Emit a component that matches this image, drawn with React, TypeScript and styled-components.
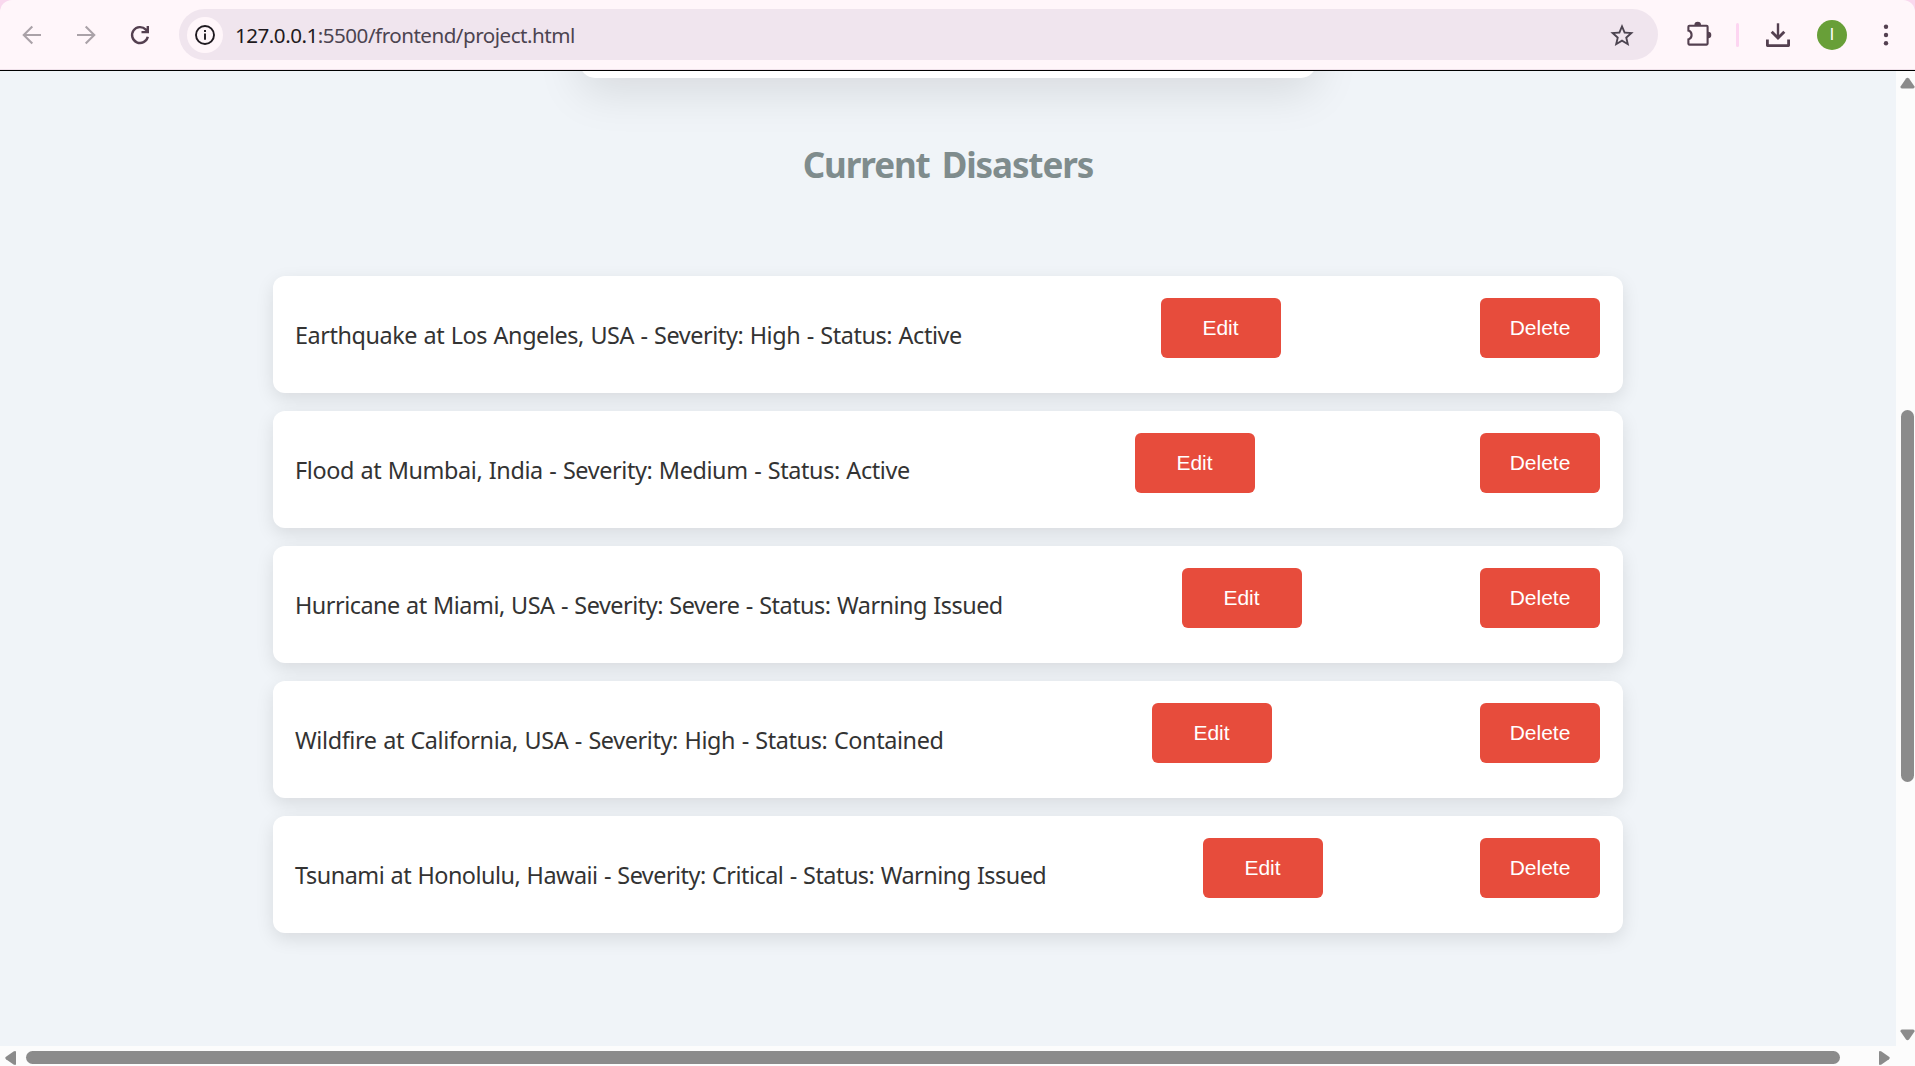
import React from "react";
import styled, { createGlobalStyle } from "styled-components";

const Global = createGlobalStyle`
  * { box-sizing: border-box; }
  body { margin: 0; overflow: hidden; background: #fcfcfc; font-family: "Noto Sans", "Open Sans", sans-serif; }
`;

const Window = styled.div`
  display: flex;
  flex-direction: column;
  width: 1915px;
  height: 1066px;
  overflow: hidden;
  background: #f9d8ee;
`;

const Toolbar = styled.header`
  display: flex;
  align-items: flex-start;
  flex: none;
  height: 71px;
  padding: 9px 14px 0 17px;
  background: #fff6fa;
  border-bottom: 1px solid #000;
  box-shadow: inset 0 -1px 0 #efe1ea;
  border-radius: 12px 12px 0 0;
`;

const NavGroup = styled.div`
  display: flex;
  align-items: center;
  gap: 24px;
  flex: none;
  width: 162px;
  height: 52px;
`;

const Icon = styled.svg<{ $size?: number; $color?: string }>`
  display: block;
  flex: none;
  width: ${(p) => p.$size ?? 30}px;
  height: ${(p) => p.$size ?? 30}px;
  color: ${(p) => p.$color ?? "#544050"};
`;

const AddressBar = styled.div`
  display: flex;
  align-items: center;
  flex: none;
  width: 1479px;
  height: 51px;
  padding: 0 22px 0 8px;
  border-radius: 26px;
  background: #f0e5ee;
`;

const SiteInfo = styled.span`
  display: grid;
  place-items: center;
  width: 36px;
  height: 36px;
  border-radius: 50%;
  background: #fff6fa;
`;

const Url = styled.span`
  flex: 1;
  margin-left: 12px;
  font-size: 20.6px;
  line-height: 28px;
  letter-spacing: -0.5px;
  color: #4c4450;
`;

const Host = styled.span`
  color: #1f1a20;
`;

const Actions = styled.div`
  display: flex;
  align-items: center;
  flex: 1;
  height: 52px;
  padding-left: 26px;
`;

const Divider = styled.span`
  flex: none;
  width: 3px;
  height: 24px;
  margin: 0 24px 0 22px;
  border-radius: 2px;
  background: #fdd5f1;
`;

const Avatar = styled.span`
  display: grid;
  place-items: center;
  flex: none;
  width: 30px;
  height: 30px;
  margin: 0 24px;
  border-radius: 50%;
  background: #689f38;
  color: #fff;
  font: 16px/30px Roboto, sans-serif;
`;

const Viewport = styled.div`
  display: grid;
  grid-template-columns: 1896px 19px;
  grid-template-rows: 975px 20px;
  background: #fcfcfc;
`;

const Page = styled.main`
  display: flex;
  flex-direction: column;
  align-items: center;
  overflow: hidden;
  background: #f0f4f8;
`;

const FormCardEnd = styled.div`
  flex: none;
  width: 736px;
  height: 290px;
  margin-top: -283px;
  border-radius: 15px;
  background: #fff;
  box-shadow: 0 15px 45px rgba(0, 0, 0, 0.1);
`;

const Title = styled.h2`
  margin: 62px 0 0;
  font-size: 35px;
  line-height: 50px;
  font-weight: 700;
  letter-spacing: -1.1px;
  word-spacing: 4px;
  color: #7f8c8d;
`;

const List = styled.ul`
  display: flex;
  flex-direction: column;
  gap: 18px;
  width: 1350px;
  margin: 86px 0 0;
  padding: 0;
  list-style: none;
`;

const Row = styled.li`
  display: flex;
  justify-content: space-between;
  height: 117px;
  padding: 22px 23px 22px 22px;
  border-radius: 12px;
  background: #fff;
  box-shadow: 0 6px 18px rgba(0, 0, 0, 0.1);
`;

const Description = styled.p<{ $width: number; $tracking: number }>`
  width: ${(p) => p.$width}px;
  margin: 18px 0 0;
  font-size: 23.4px;
  line-height: 38px;
  letter-spacing: ${(p) => p.$tracking}px;
  word-spacing: 0.8px;
  white-space: nowrap;
  color: #333;
`;

const ActionButton = styled.button`
  width: 120px;
  height: 60px;
  padding: 0;
  border: 0;
  border-radius: 6px;
  background: #e74c3c;
  color: #fff;
  font: 21px "Liberation Sans", Arial, sans-serif;
`;

const VerticalBar = styled.div`
  display: flex;
  flex-direction: column;
  align-items: flex-start;
  padding: 6px 0 5px 4px;
`;

const HorizontalBar = styled.div`
  display: flex;
  align-items: flex-start;
  padding: 5px 6px 0 5px;
`;

const VerticalThumb = styled.div`
  width: 13px;
  height: 372px;
  margin: 321px 0 auto 1px;
  border-radius: 7px;
  background: #8b8b8b;
`;

const HorizontalThumb = styled.div`
  width: 1814px;
  height: 13px;
  margin: 0 auto 0 10px;
  border-radius: 7px;
  background: #8b8b8b;
`;

const Arrow = styled.svg<{ $w: number; $h: number }>`
  display: block;
  flex: none;
  width: ${(p) => p.$w}px;
  height: ${(p) => p.$h}px;
  fill: #8b8b8b;
`;

const disasters = [
  { text: "Earthquake at Los Angeles, USA - Severity: High - Status: Active", width: 666, tracking: -0.42 },
  { text: "Flood at Mumbai, India - Severity: Medium - Status: Active", width: 614, tracking: -0.39 },
  { text: "Hurricane at Miami, USA - Severity: Severe - Status: Warning Issued", width: 708, tracking: -0.49 },
  { text: "Wildfire at California, USA - Severity: High - Status: Contained", width: 648, tracking: -0.38 },
  { text: "Tsunami at Honolulu, Hawaii - Severity: Critical - Status: Warning Issued", width: 750, tracking: -0.51 },
];

export default function App() {
  return (
    <>
      <Global />
      <Window>
        <Toolbar>
          <NavGroup>
            <Icon viewBox="0 0 20 20" $color="#aaa2a8" fill="none" stroke="currentColor" strokeWidth="1.4">
              <path d="M16 10H4.8M10.2 4.3L4.5 10l5.7 5.7" />
            </Icon>
            <Icon viewBox="0 0 20 20" $color="#aaa2a8" fill="none" stroke="currentColor" strokeWidth="1.4">
              <path d="M4 10h11.2M9.8 4.3l5.7 5.7-5.7 5.7" />
            </Icon>
            <Icon viewBox="0 0 20 20" fill="none" stroke="currentColor" strokeWidth="1.6">
              <path d="M15.2 11.2A5.3 5.3 0 1 1 13.9 6.4L15 7.6M15.2 4v4.1H11" />
            </Icon>
          </NavGroup>
          <AddressBar>
            <SiteInfo>
              <Icon viewBox="0 0 24 24" $size={24} $color="#1f1a20" fill="none" stroke="currentColor" strokeWidth="1.9">
                <circle cx="12" cy="12" r="9" />
                <path d="M12 10.6v6.2M12 7v2" />
              </Icon>
            </SiteInfo>
            <Url><Host>127.0.0.1</Host>:5500/frontend/project.html</Url>
            <Icon viewBox="0 -0.5 24 24" $size={28} $color="#4c4450" fill="currentColor">
              <path d="M22 9.24l-7.19-.62L12 2 9.19 8.63 2 9.24l5.46 4.73L5.82 21 12 17.27 18.18 21l-1.63-7.03L22 9.24zM12 15.4l-3.76 2.27 1-4.28-3.32-2.88 4.38-.38L12 6.1l1.71 4.04 4.38.38-3.32 2.88 1 4.28L12 15.4z" />
            </Icon>
          </AddressBar>
          <Actions>
            <Icon viewBox="0 0 30 30" fill="none" stroke="currentColor" strokeWidth="2.1">
              <path d="M5.4 5.8h17.2a1 1 0 0 1 1 1v16.8a1 1 0 0 1-1 1H5.4a1 1 0 0 1-1-1v-4.2c2-.6 3.2-2.3 3.2-4.4s-1.200-3.800-3.200-4.400V6.8a1 1 0 0 1 1-1z" />
              <path d="M10.400 5a3.300 3.300 0 0 1 6.600 0zM24 11.700a3.300 3.300 0 0 1 0 6.600z" fill="currentColor" stroke="none" />
            </Icon>
            <Divider />
            <Icon viewBox="0 0 30 30" fill="none" stroke="currentColor">
              <path d="M15 3.300V18" strokeWidth="2.400" />
              <path d="M8.700 11.700L15 18l6.300-6.300" strokeWidth="2.900" />
              <path d="M4.400 19.500v6.100h21.200v-6.100" strokeWidth="2.800" strokeLinejoin="round" />
            </Icon>
            <Avatar>I</Avatar>
            <Icon viewBox="0 0 30 30" fill="currentColor">
              <circle cx="15" cy="6.7" r="2.2" />
              <circle cx="15" cy="15" r="2.2" />
              <circle cx="15" cy="23.3" r="2.2" />
            </Icon>
          </Actions>
        </Toolbar>
        <Viewport>
          <Page>
            <FormCardEnd />
            <Title>Current Disasters</Title>
            <List>
              {disasters.map((d) => (
                <Row key={d.text}>
                  <Description $width={d.width} $tracking={d.tracking}>{d.text}</Description>
                  <ActionButton>Edit</ActionButton>
                  <ActionButton>Delete</ActionButton>
                </Row>
              ))}
            </List>
          </Page>
          <VerticalBar>
            <Arrow $w={15} $h={12} viewBox="0 0 15 12"><path d="M6 1.5Q7.5 0 9 1.5L14.5 9.5Q15 11.5 13 11.5H2Q0 11.5.5 9.5z" /></Arrow>
            <VerticalThumb />
            <Arrow $w={15} $h={12} viewBox="0 0 15 12"><path d="M6 10.5Q7.5 12 9 10.5L14.5 2.5Q15 .5 13 .5H2Q0 .5.5 2.5z" /></Arrow>
          </VerticalBar>
          <HorizontalBar>
            <Arrow $w={11} $h={14} viewBox="0 0 11 14"><path d="M1 5.8Q-.5 7 1 8.2L8.5 13.6Q11 14.6 11 13V1Q11-.6 8.5.4z" /></Arrow>
            <HorizontalThumb />
            <Arrow $w={11} $h={14} viewBox="0 0 11 14"><path d="M10 5.8Q11.5 7 10 8.2L2.5 13.6Q0 14.6 0 13V1Q0-.6 2.5.4z" /></Arrow>
          </HorizontalBar>
        </Viewport>
      </Window>
    </>
  );
}
